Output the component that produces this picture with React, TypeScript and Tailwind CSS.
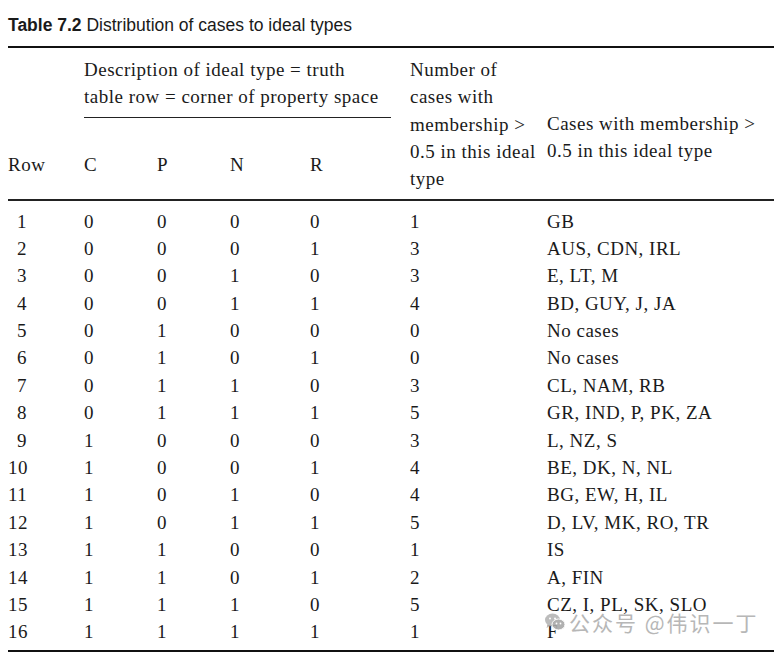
import React from "react";

const rows: [number, number, number, number, number, number, string][] = [
  [1, 0, 0, 0, 0, 1, "GB"],
  [2, 0, 0, 0, 1, 3, "AUS, CDN, IRL"],
  [3, 0, 0, 1, 0, 3, "E, LT, M"],
  [4, 0, 0, 1, 1, 4, "BD, GUY, J, JA"],
  [5, 0, 1, 0, 0, 0, "No cases"],
  [6, 0, 1, 0, 1, 0, "No cases"],
  [7, 0, 1, 1, 0, 3, "CL, NAM, RB"],
  [8, 0, 1, 1, 1, 5, "GR, IND, P, PK, ZA"],
  [9, 1, 0, 0, 0, 3, "L, NZ, S"],
  [10, 1, 0, 0, 1, 4, "BE, DK, N, NL"],
  [11, 1, 0, 1, 0, 4, "BG, EW, H, IL"],
  [12, 1, 0, 1, 1, 5, "D, LV, MK, RO, TR"],
  [13, 1, 1, 0, 0, 1, "IS"],
  [14, 1, 1, 0, 1, 2, "A, FIN"],
  [15, 1, 1, 1, 0, 5, "CZ, I, PL, SK, SLO"],
  [16, 1, 1, 1, 1, 1, "F"],
];

function WeChat() {
  return (
    <svg width="22" height="20" viewBox="0 0 22 20">
      <ellipse cx="8.5" cy="8" rx="7.5" ry="6.5" fill="#b5b5b5" />
      <path d="M3.5 12.5 L2.5 16 L6.5 13.8 Z" fill="#b5b5b5" />
      <ellipse cx="14.5" cy="12.5" rx="6.5" ry="5.5" fill="#a8a8a8" stroke="#fff" strokeWidth="1" />
      <circle cx="6" cy="6.5" r="1" fill="#fff" />
      <circle cx="11" cy="6.5" r="1" fill="#fff" />
      <circle cx="12.5" cy="11.5" r="0.9" fill="#fff" />
      <circle cx="16.5" cy="11.5" r="0.9" fill="#fff" />
    </svg>
  );
}

export default function App() {
  return (
    <div className="w-[779px] h-[654px] bg-white overflow-hidden relative">
      <div className="pl-[8px] w-[774px]">
        <div
          className="pt-[13px] text-[17.5px] leading-[24px] text-[#1a1a1a] whitespace-nowrap"
          style={{ fontFamily: '"Liberation Sans", Arial, sans-serif' }}
        >
          <span className="font-bold">Table 7.2</span> Distribution of cases to ideal types
        </div>
        <div className="mt-[9px] h-[2px] bg-[#111]" />
        <div
          className="text-[19px] leading-[27.3px] tracking-[0.5px] text-[#1a1a1a]"
          style={{ fontFamily: '"Liberation Serif", "Times New Roman", serif' }}
        >
          {/* header */}
          <div className="flex h-[151px]">
            <div className="w-[76px] pt-[103px]">Row</div>
            <div className="w-[326px] flex flex-col">
              <div className="pt-[8px] pr-[19px] whitespace-nowrap">
                <div>Description of ideal type = truth</div>
                <div>table row = corner of property space</div>
              </div>
              <div className="mt-[6px] mr-[19px] h-[1px] bg-[#222]" />
              <div className="flex pt-[33px]">
                <div className="w-[73px]">C</div>
                <div className="w-[73px]">P</div>
                <div className="w-[80px]">N</div>
                <div className="w-[100px]">R</div>
              </div>
            </div>
            <div className="w-[137px] pt-[8px] whitespace-nowrap">
              <div>Number of</div>
              <div>cases with</div>
              <div>membership &gt;</div>
              <div>0.5 in this ideal</div>
              <div>type</div>
            </div>
            <div className="flex-1 pt-[62px] whitespace-nowrap">
              <div>Cases with membership &gt;</div>
              <div>0.5 in this ideal type</div>
            </div>
          </div>
          <div className="h-[1.5px] bg-[#222]" />
          {/* body */}
          <div className="pt-[7px] pb-[4px]">
            {rows.map((r) => (
              <div key={r[0]} className="flex h-[27.4px] leading-[27.4px]">
                <div className="w-[76px]">
                  <span className="inline-block w-[19px] text-right">{r[0]}</span>
                </div>
                <div className="w-[73px]">{r[1]}</div>
                <div className="w-[73px]">{r[2]}</div>
                <div className="w-[80px]">{r[3]}</div>
                <div className="w-[100px]">{r[4]}</div>
                <div className="w-[137px]">{r[5]}</div>
                <div className="flex-1 whitespace-nowrap">{r[6]}</div>
              </div>
            ))}
          </div>
          <div className="h-[2.5px] bg-[#111]" />
        </div>
      </div>
      {/* watermark */}
      <div className="absolute left-[544px] top-[610px] flex items-center gap-[3px] opacity-90">
        <WeChat />
        <span
          className="text-[21px] leading-[24px] text-[#b0b0b0] tracking-[2px] whitespace-nowrap"
          style={{ fontFamily: '"Noto Sans CJK SC", "Noto Sans", sans-serif' }}
        >
          公众号 @伟识一丁
        </span>
      </div>
    </div>
  );
}
